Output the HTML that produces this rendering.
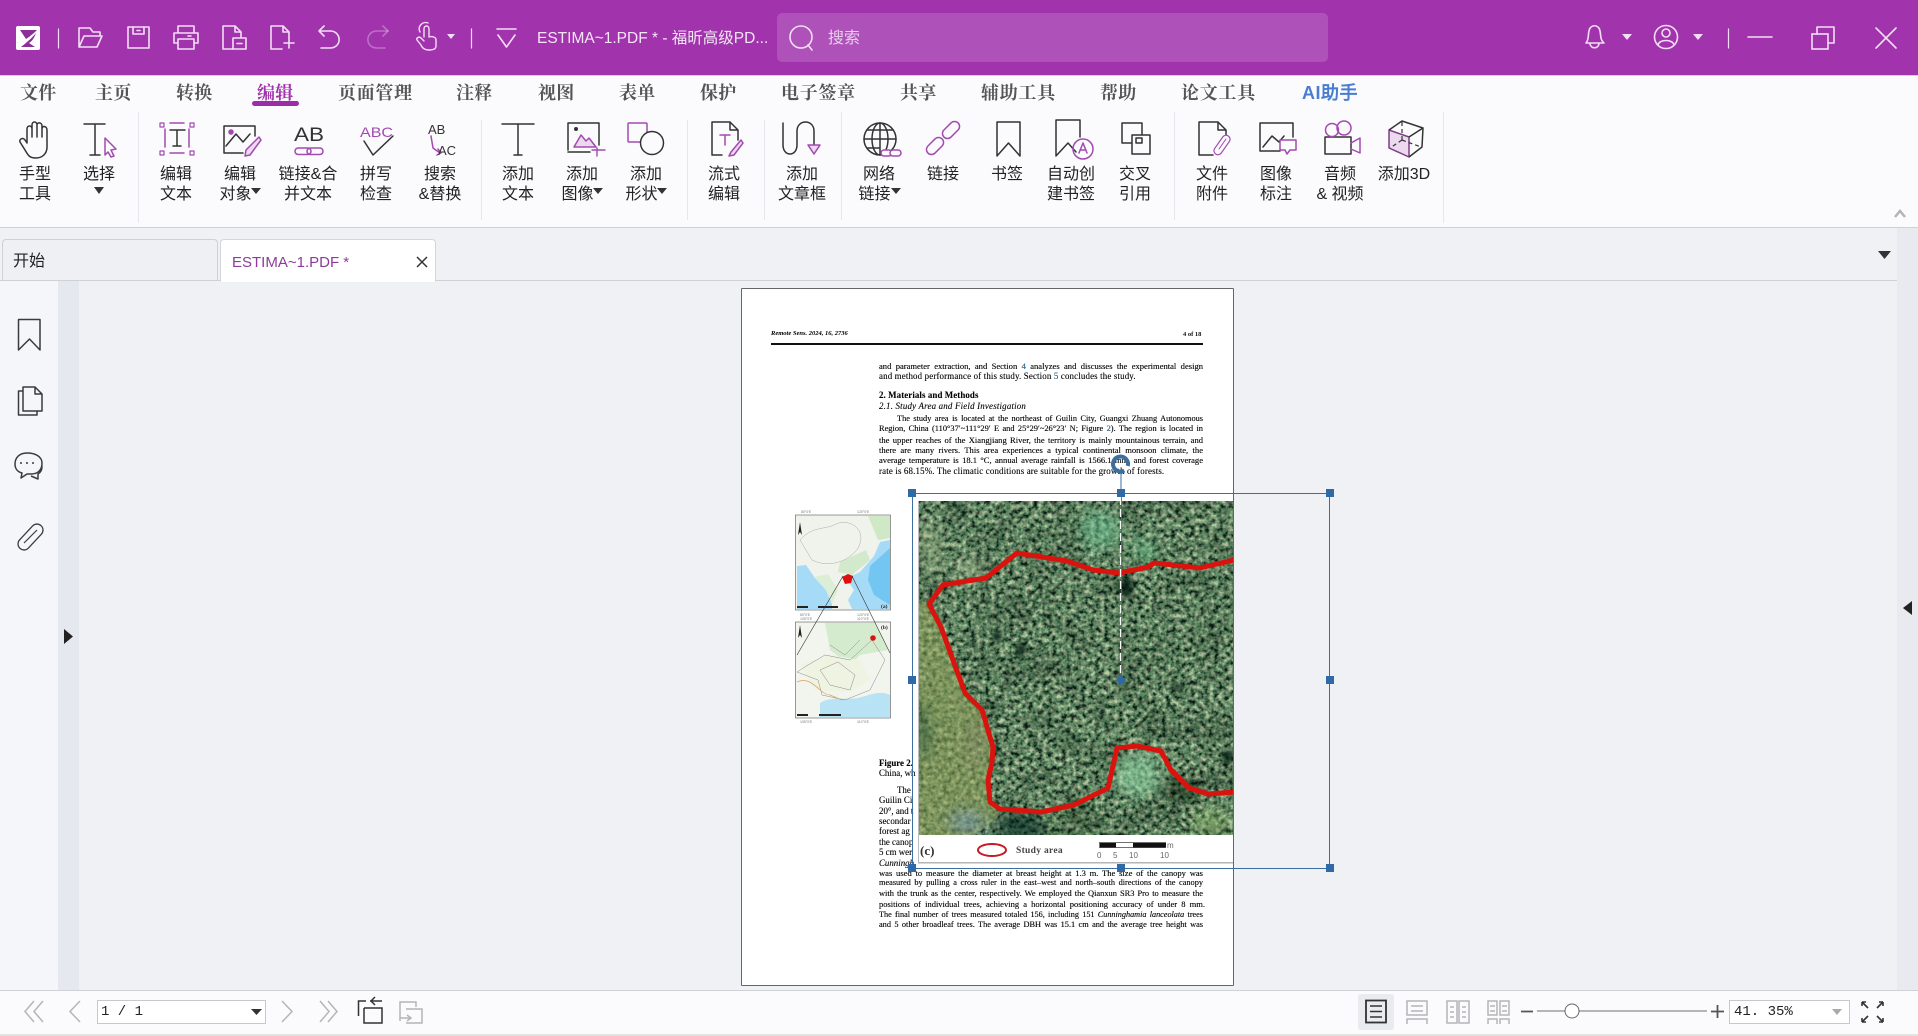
<!DOCTYPE html>
<html lang="zh"><head><meta charset="utf-8"><title>ESTIMA~1.PDF</title>
<style>
html,body{margin:0;padding:0;width:1918px;height:1036px;overflow:hidden;background:#f0f1f5}
body{position:relative;font-family:"Liberation Sans","WenQuanYi Zen Hei","Noto Sans CJK SC",sans-serif}
.a{position:absolute}
.m{position:absolute;top:82px;font-family:"Liberation Serif","Noto Serif CJK SC",serif;font-size:18px;line-height:22px;color:#555;font-weight:700;white-space:nowrap;letter-spacing:.2px}
.lb{position:absolute;top:165px;width:110px;margin-left:-55px;text-align:center;font-size:16px;line-height:19.5px;color:#222;font-family:"Liberation Sans","WenQuanYi Zen Hei","Noto Sans CJK SC",sans-serif;white-space:nowrap}
.sep{position:absolute;width:1px;background:#e6e7ea}
.t{position:absolute;font-family:"Liberation Serif","Noto Serif CJK SC",serif;color:#000;font-size:8.55px;line-height:10px;height:10px;overflow:hidden;text-align:justify;text-align-last:justify;width:324px;left:879px;-webkit-text-stroke:.12px #000}
.c{position:absolute;font-family:"Liberation Serif",serif;color:#000;font-size:8.9px;line-height:10px;white-space:nowrap;left:879px;-webkit-text-stroke:.1px #000}
svg{position:absolute;left:0;top:0;overflow:visible}
.mono{font-family:"Liberation Mono","WenQuanYi Zen Hei",monospace}
</style></head><body>
<div class="a" style="left:0;top:0;width:1918px;height:75px;background:#a134ac"></div>
<div class="a" style="left:0;top:75px;width:1918px;height:1px;background:#e6c3e9"></div>
<div class="a" style="left:777px;top:13px;width:551px;height:49px;background:#ae52b9;border-radius:5px"></div>
<div class="a" style="left:537px;top:29px;color:#f5e6f6;font-size:15.5px;line-height:20px;white-space:nowrap">ESTIMA~1.PDF * - 福昕高级PD...</div>
<div class="a" style="left:828px;top:29px;color:#e8cdec;font-size:16px;line-height:20px">搜索</div>

<div class="a" style="left:0;top:76px;width:1918px;height:151px;background:#fbfbfd"></div>
<div class="a" style="left:0;top:227px;width:1918px;height:1px;background:#cfd1d6"></div>
<div class="m" style="left:20px">文件</div><div class="m" style="left:95px">主页</div><div class="m" style="left:176px">转换</div>
<div class="m" style="left:257px;color:#a134ac">编辑</div>
<div class="a" style="left:252px;top:101px;width:47px;height:5px;border-radius:3px;background:#9a2ea6"></div>
<div class="m" style="left:338px;letter-spacing:.7px">页面管理</div><div class="m" style="left:456px">注释</div><div class="m" style="left:538px">视图</div><div class="m" style="left:619px">表单</div><div class="m" style="left:700px">保护</div><div class="m" style="left:781px;letter-spacing:.7px">电子签章</div><div class="m" style="left:900px">共享</div><div class="m" style="left:981px;letter-spacing:.7px">辅助工具</div><div class="m" style="left:1100px">帮助</div><div class="m" style="left:1181px;letter-spacing:.7px">论文工具</div>
<div class="m" style="left:1302px;color:#4a7ccf;font-family:'Liberation Sans','WenQuanYi Zen Hei',sans-serif;letter-spacing:.5px">AI助手</div>

<div class="sep" style="left:138px;top:112px;height:111px"></div><div class="sep" style="left:481px;top:120px;height:100px"></div><div class="sep" style="left:687px;top:120px;height:100px"></div><div class="sep" style="left:764px;top:120px;height:100px"></div><div class="sep" style="left:841px;top:112px;height:108px"></div><div class="sep" style="left:1174px;top:112px;height:108px"></div><div class="sep" style="left:1443px;top:112px;height:111px"></div>

<div class="lb" style="left:35px">手型<br>工具</div><div class="lb" style="left:99px">选择</div><div class="lb" style="left:176px">编辑<br>文本</div><div class="lb" style="left:240px">编辑<br>对象 &nbsp;</div><div class="lb" style="left:308px">链接&amp;合<br>并文本</div><div class="lb" style="left:376px">拼写<br>检查</div><div class="lb" style="left:440px">搜索<br>&amp;替换</div><div class="lb" style="left:518px">添加<br>文本</div><div class="lb" style="left:582px">添加<br>图像 &nbsp;</div><div class="lb" style="left:646px">添加<br>形状 &nbsp;</div><div class="lb" style="left:724px">流式<br>编辑</div><div class="lb" style="left:802px">添加<br>文章框</div><div class="lb" style="left:879px">网络<br>链接 &nbsp;</div><div class="lb" style="left:943px">链接</div><div class="lb" style="left:1007px">书签</div><div class="lb" style="left:1071px">自动创<br>建书签</div><div class="lb" style="left:1135px">交叉<br>引用</div><div class="lb" style="left:1212px">文件<br>附件</div><div class="lb" style="left:1276px">图像<br>标注</div><div class="lb" style="left:1340px">音频<br>&amp; 视频</div><div class="lb" style="left:1404px">添加3D</div>

<!-- tabs -->
<div class="a" style="left:2px;top:239px;width:214px;height:41px;background:#eff0f4;border:1px solid #cfd1d6;border-bottom:0;border-radius:4px 4px 0 0"></div>
<div class="a" style="left:0;top:280px;width:1897px;height:1px;background:#cfd1d6"></div>
<div class="a" style="left:220px;top:239px;width:214px;height:42px;background:#fff;border:1px solid #d5d6da;border-bottom:0;border-radius:4px 4px 0 0"></div>
<div class="a" style="left:13px;top:252px;font-size:16px;line-height:20px;color:#222">开始</div>
<div class="a" style="left:232px;top:253px;font-size:15px;line-height:20px;color:#8e3a9c;white-space:nowrap">ESTIMA~1.PDF *</div>

<!-- workspace -->
<div class="a" style="left:0;top:281px;width:58px;height:709px;background:#f5f6fa"></div>
<div class="a" style="left:58px;top:281px;width:21px;height:709px;background:#e6e8ef"></div>
<div class="a" style="left:1897px;top:228px;width:21px;height:762px;background:#e8eaf0"></div>

<!-- page -->
<div class="a" style="left:741px;top:288px;width:491px;height:696px;background:#fff;border:1px solid #666;border-radius:1px"></div>
<div class="a" style="left:771px;top:329px;font:italic 700 6.5px/10px 'Liberation Serif',serif;color:#000;white-space:nowrap">Remote Sens. 2024, 16, 2736</div>
<div class="a" style="left:1183px;top:330px;font:700 6.5px/10px 'Liberation Serif',serif;color:#111;white-space:nowrap">4 of 18</div>
<div class="a" style="left:771px;top:343px;width:432px;height:1.5px;background:#111"></div>
<div class="t" style="top:361px">and parameter extraction, and Section <span style="color:#2a7ab0">4</span> analyzes and discusses the experimental design</div>
<div class="c" style="top:371px;letter-spacing:.16px">and method performance of this study. Section <span style="color:#2a7ab0">5</span> concludes the study.</div>
<div class="c" style="top:390px;font-weight:700;letter-spacing:.1px">2. Materials and Methods</div>
<div class="c" style="top:401px;font-style:italic;letter-spacing:.2px">2.1. Study Area and Field Investigation</div>
<div class="t" style="top:414px;left:897px;width:306px;font-size:8.3px">The study area is located at the northeast of Guilin City, Guangxi Zhuang Autonomous</div>
<div class="t" style="top:424px;font-size:8.4px">Region, China (110°37′~111°29′ E and 25°29′~26°23′ N; Figure <span style="color:#2a7ab0">2</span>). The region is located in</div>
<div class="t" style="top:435px">the upper reaches of the Xiangjiang River, the territory is mainly mountainous terrain, and</div>
<div class="t" style="top:445px">there are many rivers. This area experiences a typical continental monsoon climate, the</div>
<div class="t" style="top:455px">average temperature is 18.1 °C, annual average rainfall is 1566.1 mm, and forest coverage</div>
<div class="c" style="top:466px;letter-spacing:.16px">rate is 68.15%. The climatic conditions are suitable for the growth of forests.</div>

<div class="c" style="top:758px;font-weight:700">Figure 2.</div><div class="c" style="top:768px">China, wh</div>
<div class="c" style="top:785px;left:897px">The</div><div class="c" style="top:795px">Guilin Ci</div><div class="c" style="top:806px">20°, and t</div><div class="c" style="top:816px">secondar</div><div class="c" style="top:826px">forest ag</div><div class="c" style="top:837px">the canop</div><div class="c" style="top:847px">5 cm wer</div><div class="c" style="top:858px;font-style:italic">Cunningh</div>
<div class="t" style="top:868px">was used to measure the diameter at breast height at 1.3 m. The size of the canopy was</div>
<div class="t" style="top:878px;font-size:8.3px">measured by pulling a cross ruler in the east–west and north–south directions of the canopy</div>
<div class="t" style="top:889px;font-size:8.4px">with the trunk as the center, respectively. We employed the Qianxun SR3 Pro to measure the</div>
<div class="t" style="top:899px;width:326px;font-size:8.5px">positions of individual trees, achieving a horizontal positioning accuracy of under 8 mm.</div>
<div class="t" style="top:910px;font-size:8.2px">The final number of trees measured totaled 156, including 151 <i>Cunninghamia lanceolata</i> trees</div>
<div class="t" style="top:920px;font-size:8.3px">and 5 other broadleaf trees. The average DBH was 15.1 cm and the average tree height was</div>

<!-- maps and forest -->
<svg width="1918" height="1036" viewBox="0 0 1918 1036" xmlns="http://www.w3.org/2000/svg">
<defs>
<filter id="fo" x="0" y="0" width="100%" height="100%" color-interpolation-filters="sRGB">
<feTurbulence type="fractalNoise" baseFrequency="0.21" numOctaves="3" seed="11"/>
<feColorMatrix values="1.9 0 0 0 -.45 1.9 0 0 0 -.45 1.9 0 0 0 -.45 0 0 0 0 1"/>
<feComponentTransfer>
<feFuncR type="table" tableValues=".05 .14 .26 .36 .45 .57 .74"/>
<feFuncG type="table" tableValues=".1 .26 .41 .52 .6 .69 .8"/>
<feFuncB type="table" tableValues=".08 .18 .29 .38 .45 .53 .66"/>
</feComponentTransfer>
</filter>
<filter id="pk" x="0" y="0" width="100%" height="100%" color-interpolation-filters="sRGB">
<feTurbulence type="fractalNoise" baseFrequency="0.19" numOctaves="2" seed="23"/>
<feColorMatrix values="0 0 0 0 .78 0 0 0 0 .62 0 0 0 0 .6 0 9 0 0 -5"/>
</filter>
<filter id="dk" x="0" y="0" width="100%" height="100%" color-interpolation-filters="sRGB">
<feTurbulence type="fractalNoise" baseFrequency="0.035" numOctaves="2" seed="5"/>
<feColorMatrix values="0 0 0 0 .02 0 0 0 0 .08 0 0 0 0 .05 3.500 0 0 0 -1.500"/>
</filter>
<filter id="me" x="0" y="0" width="100%" height="100%" color-interpolation-filters="sRGB">
<feTurbulence type="fractalNoise" baseFrequency="0.25" numOctaves="3" seed="3"/>
<feColorMatrix values="1.3 0 0 0 -.15 1.3 0 0 0 -.15 1.3 0 0 0 -.15 0 0 0 0 1"/>
<feComponentTransfer>
<feFuncR type="table" tableValues=".3 .48 .6 .74"/><feFuncG type="table" tableValues=".4 .56 .66 .76"/><feFuncB type="table" tableValues=".22 .32 .4 .5"/>
</feComponentTransfer>
</filter>
<filter id="bl"><feGaussianBlur stdDeviation="7"/></filter>
<filter id="bs"><feGaussianBlur stdDeviation="3"/></filter>
<clipPath id="im"><rect x="918" y="501" width="315" height="334"/></clipPath>
<clipPath id="mc"><path d="M918 600 L929 604 L941 627 L965 693 L982 710 L993 747 L992 762 L988 780 L990 802 L1000 815 L975 835 L918 835Z"/></clipPath>
</defs>

<!-- map a -->
<rect x="795.500" y="515" width="95" height="95" fill="#f0f3ec" stroke="#555" stroke-width=".6"/>
<path d="M797 566 L806 565 L815 578 L826 590 L832 604 L832 609 L797 609Z" fill="#a6dbf7"/>
<path d="M846 578 L854 590 L848 600 L852 609 L890 609 L890 540 L880 542 L874 556 L868 563 L860 572 L852 576Z" fill="#a6dbf7"/>
<path d="M870 566 L890 548 L890 605 L874 595 L868 580Z" fill="#62bef0" opacity=".75"/>
<path d="M868 516 L890 516 L890 538 L878 540 L874 530Z" fill="#cfe8c6"/>
<path d="M840 562 L866 550 L870 560 L852 575 L838 572Z" fill="#d3e9cb"/>
<path d="M814 577 L828 574 L838 590 L832 604 L826 590Z" fill="#dcefd6"/>
<path d="M800 540 C812 526 825 530 836 524 C850 518 868 530 858 548 C852 558 832 570 812 560Z" fill="none" stroke="#aaa" stroke-width=".5"/>
<path d="M842 577 L848 574 L853 576 L851 583 L845 584Z" fill="#e01010"/>
<rect x="797" y="606" width="11" height="2" fill="#222"/><rect x="818" y="606" width="20" height="2" fill="#222"/>
<!-- map b -->
<rect x="795.500" y="622" width="95" height="96" fill="#f2f5ee" stroke="#555" stroke-width=".6"/>
<path d="M825 623 L875 623 L888 650 L860 655 L850 665 L830 650Z" fill="#d5ebcd"/>
<path d="M800 665 L830 655 L860 660 L870 680 L850 692 L815 690Z" fill="#eef3e2"/>
<path d="M820 703 C830 696 848 700 858 698 C870 695 880 690 890 695 L890 717 L820 717Z" fill="#b8e3f5"/>
<path d="M797 672 L818 680 L822 695 L845 700 L870 690 L885 660 L872 640 L850 660 L825 655 L808 665Z M820 670 L838 662 L855 675 L850 690 L830 685Z M830 645 L845 655 L860 640" fill="none" stroke="#8a8a85" stroke-width=".5"/>
<path d="M797 682 C812 675 820 695 830 695 L842 700" fill="none" stroke="#d9a060" stroke-width=".7"/>
<circle cx="873" cy="638" r="2.800" fill="#d81515"/>
<rect x="797" y="714" width="11" height="2" fill="#222"/><rect x="819" y="714" width="22" height="2" fill="#222"/>
<path d="M843 576 L797 655 M852 576 L890 653" stroke="#333" stroke-width=".6" fill="none"/>
<g font-family="Liberation Serif,serif" font-size="5.500" font-weight="700" fill="#222"><text x="881" y="608">(a)</text><text x="881" y="629">(b)</text></g>
<path d="M798 535 L800 522 L802 535 L800 532Z M798 638 L800 625 L802 638 L800 635Z" fill="#222"/>
<g font-family="Liberation Sans,sans-serif" font-size="3.500" fill="#777"><text x="801" y="513">80°0′E</text><text x="857" y="513">120°0′E</text><text x="800" y="616">80°0′E</text><text x="857" y="616">120°0′E</text><text x="800" y="620">105°0′E</text><text x="857" y="620">110°0′E</text><text x="800" y="723">105°0′E</text><text x="857" y="723">110°0′E</text></g>

<!-- figure c -->
<rect x="918" y="501" width="315" height="362" fill="#fff"/>
<g clip-path="url(#im)">
<rect x="918" y="501" width="316" height="334" filter="url(#fo)"/>
<rect x="918" y="501" width="316" height="334" filter="url(#pk)" opacity=".3"/>
<rect x="918" y="501" width="316" height="334" filter="url(#dk)" opacity=".3"/>
<g clip-path="url(#mc)">
<rect x="918" y="590" width="90" height="245" filter="url(#me)"/>
<g filter="url(#bl)"><ellipse cx="922" cy="730" rx="6" ry="28" fill="#25502c" opacity=".9"/><ellipse cx="975" cy="745" rx="10" ry="25" fill="#8d8a66" opacity=".6"/></g>
</g>
<g filter="url(#bl)">
<ellipse cx="1100" cy="530" rx="20" ry="20" fill="#72c395" opacity=".8"/>
<ellipse cx="1145" cy="550" rx="12" ry="14" fill="#68c08a" opacity=".7"/>
<ellipse cx="930" cy="550" rx="12" ry="28" fill="#a3b88a" opacity=".7"/>
<ellipse cx="970" cy="570" rx="14" ry="14" fill="#b0c29a" opacity=".65"/>
<ellipse cx="1137" cy="775" rx="22" ry="22" fill="#96dcaa" opacity=".85"/>
<ellipse cx="1019" cy="826" rx="24" ry="14" fill="#04241f" opacity=".95"/>
<ellipse cx="1178" cy="790" rx="26" ry="9" fill="#021006" opacity=".85"/>
<ellipse cx="967" cy="822" rx="18" ry="11" fill="#7d9aa8" opacity=".9"/>
<ellipse cx="1211" cy="822" rx="18" ry="12" fill="#9ac070" opacity=".75"/>
<ellipse cx="1080" cy="822" rx="26" ry="11" fill="#16301a" opacity=".5"/>
</g>
<rect x="918" y="501" width="316" height="334" filter="url(#fo)" opacity=".3"/>
<g filter="url(#bs)" fill="#03140b" opacity=".85"><ellipse cx="1021" cy="650" rx="5" ry="8"/><ellipse cx="1126" cy="587" rx="7" ry="9"/><ellipse cx="997" cy="637" rx="5" ry="5"/><ellipse cx="1178" cy="688" rx="6" ry="4"/><ellipse cx="1228" cy="757" rx="5" ry="8"/></g>
<path d="M1234 560 L1200 568 L1154 563 L1148 567 L1119 573 L1093 570 L1067 561 L1017 553 L986 578 L943 585 L929 604 L941 627 L965 693 L982 710 L993 747 L992 762 L988 780 L990 802 L1000 809 L1041 812 L1074 805 L1108 788 L1117 748 L1137 746 L1161 751 L1171 770 L1189 788 L1208 794 L1234 792" fill="none" stroke="#d9140f" stroke-width="5" stroke-linejoin="round"/>
</g>
<rect x="918" y="501" width="1" height="362" fill="#bbb"/>
<rect x="918" y="862" width="315" height="1.500" fill="#b5b5b5"/>
<text x="920" y="855" font-family="Liberation Serif,serif" font-size="13" font-weight="700" fill="#333">(c)</text>
<ellipse cx="992" cy="850" rx="14" ry="6" fill="#fff" stroke="#c41a24" stroke-width="2"/>
<text x="1016" y="853" font-family="Liberation Serif,serif" font-size="9.500" font-weight="700" fill="#444" letter-spacing=".3">Study area</text>
<rect x="1099.500" y="842.500" width="66" height="5" fill="#fff" stroke="#111" stroke-width=".6"/>
<rect x="1100" y="843" width="16" height="4.500" fill="#111"/><rect x="1133" y="843" width="33" height="4.500" fill="#111"/>
<g font-family="Liberation Sans,sans-serif" font-size="8" fill="#666"><text x="1097" y="858">0</text><text x="1113" y="858">5</text><text x="1129" y="858">10</text><text x="1160" y="858">10</text><text x="1167" y="848">m</text></g>

<!-- selection -->
<rect x="912.500" y="493.500" width="417" height="375" fill="none" stroke="#3a6f9f" stroke-width="1"/>
<line x1="1121" y1="470" x2="1121" y2="493" stroke="#3a6f9f"/>
<line x1="1121.500" y1="497" x2="1121.500" y2="680" stroke="#3a6f9f"/>
<line x1="1120.500" y1="497" x2="1120.500" y2="676" stroke="#fff" stroke-width="1.300" stroke-dasharray="8 4"/>
<circle cx="1120.500" cy="464" r="7.500" fill="none" stroke="#3b6f9f" stroke-width="4" stroke-dasharray="41 6.100" transform="rotate(60 1120.500 464)"/>
<path d="M1121 675 L1126 680 L1121 685 L1116 680Z" fill="#2f6aa6"/>
<g fill="#2f6aa6"><rect x="908" y="489" width="8" height="8"/><rect x="1117" y="489" width="8" height="8"/><rect x="1326" y="489" width="8" height="8"/><rect x="908" y="676" width="8" height="8"/><rect x="1326" y="676" width="8" height="8"/><rect x="908" y="864" width="8" height="8"/><rect x="1117" y="864" width="8" height="8"/><rect x="1326" y="864" width="8" height="8"/></g>

<!-- title bar icons -->
<rect x="16" y="26" width="24" height="24" rx="2" fill="#fff"/>
<path d="M20 30 L37 30 C33 34 29 37 26 39 C24 36 22 33 20 30Z M36 33 C34 39 31 42 29 43 L35 47 L21 47 C26 43 32 38 36 33Z" fill="#8c2f97"/>
<g fill="none" stroke="#f3dff5" stroke-width="1.600" stroke-linejoin="round" stroke-linecap="round">
<line x1="58.500" y1="29" x2="58.500" y2="48" stroke-width="1.200"/>
<path d="M79 47 L79 28 L90 28 L93 32 L100 32 L100 35 M79 47 L97 47 L102 36 L84 36 L79 47"/>
<rect x="128" y="27" width="21" height="21"/><path d="M133 27 L133 34 L144 34 L144 27 M137 30.500 L140 30.500"/>
<path d="M178 33 L178 26 L194 26 L194 33 M178 43 L174 43 L174 33 L198 33 L198 43 L194 43 M178 39 L194 39 L194 49 L178 49Z M188 36 L191 36"/>
<path d="M233 49 L223 49 L223 26 L235 26 L241 32 L241 37 M235 26 L235 32 L241 32"/><rect x="233" y="38" width="13" height="11"/><path d="M237 43.500 L242 43.500"/>
<path d="M282 49 L271 49 L271 26 L283 26 L289 32 L289 40 M283 26 L283 32 L289 32 M284 43 L294 43 M289 38 L289 48"/>
<path d="M324 26 L319 31 L324 36 M319 31 L331 31 C342 32 342 48 330 48 L321 48"/>
<path d="M383 26 L388 31 L383 36" opacity=".35"/><path d="M388 31 L376 31 C365 32 365 48 377 48 L385 48" opacity=".35"/>
<path d="M424 37 L424 29 C424 25 429 25 429 29 L429 37 C432 36 436 37 436 40 L436 46 C436 49 433 50 429 50 C425 50 422 48 421 45 L417 40 C416 38 419 36 421 38 L424 41 M420 32 C417 26 423 21 428 23" stroke-width="1.400"/>
<line x1="471.500" y1="29" x2="471.500" y2="48" stroke-width="1.200"/>
<path d="M497 29 L516 29 M498 35 L506.500 47 L515 35"/>
<circle cx="801" cy="37" r="11"/><path d="M808 45 L812 50"/>
<path d="M1586 43 C1589 40 1588 34 1589 31 C1590 24 1599 24 1600 31 C1601 35 1600 40 1604 43 Z M1590 44 C1591 49 1598 49 1599 44"/>
<circle cx="1666" cy="37" r="11.500"/><circle cx="1666" cy="33" r="4"/><path d="M1658 45 C1659 39 1673 39 1674 45"/>
<line x1="1728.500" y1="29" x2="1728.500" y2="48" stroke-width="1.200"/>
<path d="M1748 37 L1772 37"/>
<rect x="1812" y="34" width="16" height="15" stroke-linejoin="miter"/><path d="M1817 34 L1817 27 L1834 27 L1834 43 L1828 43"/>
<path d="M1876 28 L1896 48 M1896 28 L1876 48"/>
</g>
<g fill="#f3dff5"><path d="M447 34 L455 34 L451 39Z M1622 34 L1632 34 L1627 40Z M1693 34 L1703 34 L1698 40Z"/></g>

<!-- toolbar icons -->
<g fill="none" stroke="#333" stroke-width="1.500" stroke-linecap="round" stroke-linejoin="round">
<path d="M27 139 L27 129 C27 125 32 125 32 129 L32 137 M32 137 L32 125 C32 121 37 121 37 125 L37 137 M37 137 L37 125 C37 122 42 122 42 126 L42 137 M42 137 L42 129 C42 125 47 126 47 130 L47 147 C47 154 42 158 36 158 C29 158 28 155 25 150 L20 142 C19 139 23 137 25 140 L27 143 L27 139"/>
<path d="M84 124 L105 124 M95 124 L95 155 M90 155 L100 155"/>
<path d="M165 129 L165 147 M189 129 L189 147 M170 123 L184 123 M170 153 L184 153" stroke="#a24ab0"/>
<path d="M170 130 L185 130 M177 130 L177 146 M173 146 L181 146"/>
<path d="M224 126 L255 126 M224 126 L224 153 L243 153 M255 126 L255 136 M226 146 L236 134 L243 142 L250 134"/>
<path d="M502 124 L534 124 M518 124 L518 155 M514 155 L522 155"/>
<path d="M568 150 L568 123 L599 123 L599 145 M568 152 L590 152"/>
<path d="M712 155 L712 122 L730 122 L738 130 L738 140 M730 122 L730 130 L738 130 M712 155 L722 155"/>
<path d="M783 123 L783 145 C783 157 797 157 797 145 L797 131 C797 119 814 119 814 131 L814 145"/>
<circle cx="880" cy="139" r="16"/><ellipse cx="880" cy="139" rx="8" ry="16"/><path d="M864 139 L896 139 M880 123 L880 155 M867 130 L893 130 M867 148 L880 148"/>
<path d="M997 122 L1020 122 L1020 156 L1008.500 143 L997 156Z"/>
<path d="M1056 120 L1080 120 L1080 137 M1056 120 L1056 156 L1068 143 L1076 152"/>
<rect x="1122" y="123" width="20" height="20"/><rect x="1132" y="135" width="18" height="19" fill="#fbfbfd"/><rect x="1136" y="138" width="6" height="5"/>
<path d="M1199 155 L1199 122 L1218 122 L1226 130 L1226 138 M1218 122 L1218 130 L1226 130 M1199 155 L1213 155"/>
<path d="M1260 151 L1260 123 L1293 123 L1293 137 M1263 147 L1272 136 L1279 142 L1284 136 M1260 151 L1280 151"/>
<rect x="1325" y="137" width="26" height="17"/><circle cx="1332" cy="130" r="6.500" stroke="#a24ab0"/><circle cx="1344" cy="128" r="7" stroke="#a24ab0"/><path d="M1351 143 L1360 138 L1360 153 L1351 149" stroke="#a24ab0"/>
</g>
<g fill="none" stroke="#a24ab0" stroke-width="1.500" stroke-linecap="round" stroke-linejoin="round">
<path d="M105 138 L116 149 L111 150 L114 156 L111 157 L108 152 L105 155Z"/>
<rect x="160" y="123" width="4" height="4" stroke-width="1.200"/><rect x="190" y="123" width="4" height="4" stroke-width="1.200"/><rect x="160" y="151" width="4" height="4" stroke-width="1.200"/><rect x="190" y="151" width="4" height="4" stroke-width="1.200"/>
<circle cx="231" cy="132" r="2" fill="#a24ab0"/>
<path d="M246 150 L259 137 L261 140 L250 155 L245 156Z" fill="#ecd9ef"/>
<rect x="295" y="148" width="16" height="6.500" rx="3.200"/><rect x="307" y="148" width="16" height="6.500" rx="3.200"/>
<path d="M364 141 L373 155 L393 136" stroke="#333"/>
<path d="M431 136 L433 148 L440 153 M438 149 L441 153 L437 155"/>
<path d="M574 147 L581 135 L586 141 L589 138 L596 147Z" fill="#ecd9ef"/><circle cx="576" cy="129" r="2" fill="#333" stroke="none"/><path d="M597 148 L597 156 M592 150 L605 150" stroke-width="1.400"/>
<rect x="628" y="123" width="19" height="19" stroke="#a24ab0" rx="1"/><circle cx="652" cy="143" r="11.500" stroke="#333" fill="#fbfbfd"/>
<path d="M720 135 L730 135 M725 135 L725 145"/><path d="M731 152 L741 140 L743 143 L734 155 L729 156Z" fill="#ecd9ef"/>
<path d="M808 145 L820 145 L814 154Z" fill="#ecd9ef"/>
<rect x="881" y="150" width="11" height="6" rx="3" fill="#fbfbfd"/><rect x="890" y="150" width="11" height="6" rx="3" fill="#fbfbfd"/>
<rect x="925" y="141" width="20" height="10" rx="5" transform="rotate(-45 935 146)"/><rect x="941" y="125" width="20" height="10" rx="5" transform="rotate(-45 951 130)"/>
<circle cx="1083" cy="149" r="10"/><path d="M1079 153 L1083 143 L1087 153 M1080 150 L1086 150"/>
<rect x="1211" y="141" width="22" height="8" rx="4" transform="rotate(-55 1222 145)" fill="#fbfbfd" stroke-width="1.200"/><path d="M1219 149 L1226 139" stroke-width="1"/>
<path d="M1280 140 L1296 140 L1296 150 L1290 150 L1287 154 L1285 150 L1280 150Z" fill="#fbfbfd"/>
<path d="M1389 130 L1409 137 L1409 157 L1389 148Z" fill="#ecd9ef" stroke="#7d3f87"/>
</g>
<g fill="none" stroke="#333" stroke-width="1.500" stroke-linejoin="round">
<path d="M1389 130 L1402 121 L1423 128 L1409 137 M1423 128 L1422 147 L1409 157"/>
<path d="M1402 122 L1402 140 M1402 140 L1390 148 M1402 140 L1421 147" stroke-dasharray="4 3" stroke-width="1.200"/>
</g>
<g fill="#333" font-family="Liberation Sans,sans-serif">
<text x="294" y="141" font-size="19" textLength="30" lengthAdjust="spacingAndGlyphs">AB</text><text x="428" y="134" font-size="13">AB</text><text x="438" y="155" font-size="13">AC</text>
</g>
<text x="360" y="137" font-family="Liberation Sans,sans-serif" font-size="14" fill="#a24ab0" textLength="33" lengthAdjust="spacingAndGlyphs">ABC</text>
<g fill="#333"><path d="M94 187 L104 187 L99 194Z M251 188 L261 188 L256 194Z M593 188 L603 188 L598 194Z M657 188 L667 188 L662 194Z M891 188 L901 188 L896 194Z"/></g>
<path d="M1895 217 L1900 211 L1905 217" fill="none" stroke="#b5b5b8" stroke-width="2.500"/>

<!-- tabs and side -->
<path d="M417 257 L427 267 M427 257 L417 267" stroke="#333" stroke-width="1.500" fill="none"/>
<path d="M1878 251 L1891 251 L1884.500 259Z" fill="#333"/>
<path d="M64 629 L73 636.500 L64 644Z" fill="#222"/>
<path d="M1912 601 L1903 608 L1912 615Z" fill="#222"/>
<g fill="none" stroke="#3a3a40" stroke-width="1.500" stroke-linejoin="round">
<path d="M18.500 319.500 L40 319.500 L40 350 L29.500 339 L18.500 350Z"/>
<path d="M23 387 L35 387 L42 394 L42 411 L23 411Z M35 387 L35 394 L42 394 M23 391 L18.500 391 L18.500 415 L37 415 L37 411"/>
<path d="M27 453 C19 453 15 458 15 464 C15 469 18 472 22 473 L21 478 L27 474 L31 474 C38 474 42 470 42 463 C42 457 36 453 27 453Z M42 466 C42 470 41 472 38 474 L38 479 L31 476"/>
<rect x="15" y="531" width="31" height="12" rx="6" transform="rotate(-47 30.500 537)" stroke-width="1.300"/><path d="M24 543 L37 530" stroke-width="1.200"/>
</g>
<g fill="#3a3a40"><circle cx="21" cy="463" r="1"/><circle cx="27" cy="463" r="1"/><circle cx="33" cy="463" r="1"/></g>

<!-- bottom -->
<rect x="0" y="990" width="1918" height="1" fill="#cfd1d6"/><rect x="0" y="991" width="1918" height="43" fill="#fbfbfd"/><rect x="0" y="1034" width="1918" height="2" fill="#e3e3e1"/>
<rect x="97.500" y="1000.500" width="168" height="23" fill="#fff" stroke="#c8c9cf"/>
<rect x="1358" y="994" width="36" height="36" rx="3" fill="#e9ebf1"/>
<rect x="1729.500" y="1000.500" width="120" height="23" fill="#fff" stroke="#c8c9cf"/>
<g fill="none" stroke="#b5b5b8" stroke-width="1.500">
<path d="M34 1001 L25 1011.500 L34 1022 M43 1001 L34 1011.500 L43 1022 M80 1001 L70 1011.500 L80 1022 M282 1001 L292 1011.500 L282 1022 M320 1001 L329 1011.500 L320 1022 M328 1001 L337 1011.500 L328 1022"/>
<path d="M400 1021 L400 1002 L416 1002 L416 1007 M406 1009 L422 1009 L422 1023 L406 1023 M400 1018 L411 1018 M407 1015 L411 1018 L407 1021"/>
<rect x="1407" y="1001" width="20" height="14"/><path d="M1411 1006 L1423 1006 M1411 1011 L1423 1011 M1407 1024 L1407 1019 L1427 1019 L1427 1024"/>
<rect x="1447" y="1001" width="10" height="22"/><rect x="1459" y="1001" width="10" height="22"/><path d="M1450 1007 L1454 1007 M1450 1012 L1454 1012 M1450 1017 L1454 1017 M1462 1007 L1466 1007 M1462 1012 L1466 1012 M1462 1017 L1466 1017"/>
<rect x="1488" y="1001" width="9" height="14"/><rect x="1500" y="1001" width="9" height="14"/><path d="M1490 1006 L1495 1006 M1490 1011 L1495 1011 M1502 1006 L1507 1006 M1502 1011 L1507 1011 M1488 1024 L1488 1019 L1497 1019 L1497 1024 M1500 1024 L1500 1019 L1509 1019 L1509 1024"/>
</g>
<g fill="none" stroke="#333" stroke-width="1.600">
<path d="M366 1001 L358.500 1001 L358.500 1016 M364 1008 L382 1008 L382 1023 L364 1023 L364 1008 M370 1001 L382 1001 M375 997 L371 1001 L375 1005" stroke-width="1.500"/>
<rect x="1366" y="1000.500" width="20" height="22" stroke-width="1.800"/><path d="M1370 1006 L1382 1006 M1370 1011.500 L1382 1011.500 M1370 1017 L1382 1017"/>
<path d="M1521 1011.500 L1533 1011.500 M1711 1011.500 L1724 1011.500 M1717.500 1005 L1717.500 1018" stroke="#555" stroke-width="1.800"/>
<path d="M1862 1002 L1868 1008 M1862 1002 L1862 1006 M1862 1002 L1866 1002 M1883 1002 L1877 1008 M1883 1002 L1883 1006 M1883 1002 L1879 1002 M1862 1022 L1868 1016 M1862 1022 L1862 1018 M1862 1022 L1866 1022 M1883 1022 L1877 1016 M1883 1022 L1883 1018 M1883 1022 L1879 1022"/>
</g>
<rect x="1537" y="1010" width="170" height="2" fill="#b5b5b8"/><circle cx="1572" cy="1011" r="7" fill="#fff" stroke="#666"/>
<path d="M251 1009 L262 1009 L256.500 1015Z" fill="#333"/><path d="M1832 1009 L1842 1009 L1837 1015Z" fill="#aaa"/>
</svg>
<div class="a mono" style="left:101px;top:1003px;font-size:14px;line-height:18px;color:#222;white-space:pre">1 / 1</div>
<div class="a mono" style="left:1734px;top:1003px;font-size:14px;line-height:18px;color:#222;white-space:pre">41. 35%</div>
</body></html>
